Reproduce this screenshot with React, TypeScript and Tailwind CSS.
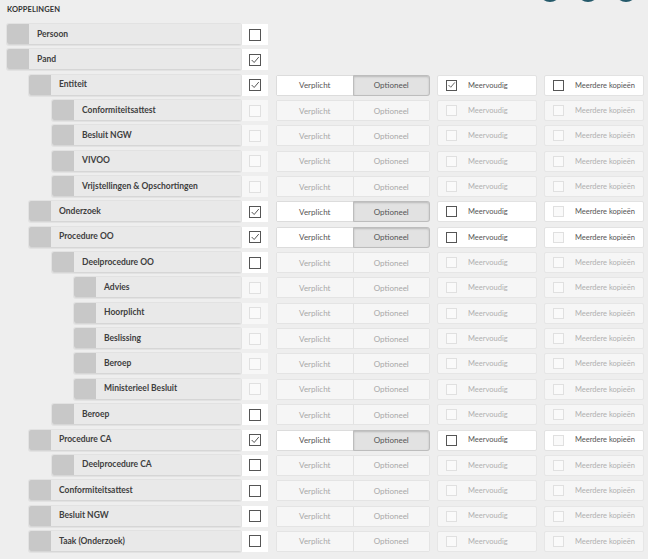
import React from "react";

type Row = {
  label: string;
  level: 0 | 1 | 2 | 3;
  checked?: boolean;
  locked?: boolean; // left checkbox disabled
  options?: "none" | "active" | "disabled";
  multiple?: boolean;
};

const ROWS: Row[] = [
  { label: "Persoon", level: 0, options: "none" },
  { label: "Pand", level: 0, checked: true, options: "none" },
  { label: "Entiteit", level: 1, checked: true, options: "active", multiple: true },
  { label: "Conformiteitsattest", level: 2, locked: true, options: "disabled" },
  { label: "Besluit NGW", level: 2, locked: true, options: "disabled" },
  { label: "VIVOO", level: 2, locked: true, options: "disabled" },
  { label: "Vrijstellingen & Opschortingen", level: 2, locked: true, options: "disabled" },
  { label: "Onderzoek", level: 1, checked: true, options: "active" },
  { label: "Procedure OO", level: 1, checked: true, options: "active" },
  { label: "Deelprocedure OO", level: 2, options: "disabled" },
  { label: "Advies", level: 3, locked: true, options: "disabled" },
  { label: "Hoorplicht", level: 3, locked: true, options: "disabled" },
  { label: "Beslissing", level: 3, locked: true, options: "disabled" },
  { label: "Beroep", level: 3, locked: true, options: "disabled" },
  { label: "Ministerieel Besluit", level: 3, locked: true, options: "disabled" },
  { label: "Beroep", level: 2, options: "disabled" },
  { label: "Procedure CA", level: 1, checked: true, options: "active" },
  { label: "Deelprocedure CA", level: 2, options: "disabled" },
  { label: "Conformiteitsattest", level: 1, options: "disabled" },
  { label: "Besluit NGW", level: 1, options: "disabled" },
  { label: "Taak (Onderzoek)", level: 1, options: "disabled" },
];

const INDENT = ["w-0", "w-[22px]", "w-[45px]", "w-[67px]"];

function Box({ checked, state, size }: { checked?: boolean; state: "on" | "off"; size: "lg" | "sm" }) {
  return (
    <span
      className={`flex items-center justify-center border ${
        size === "lg" ? "w-[12px] h-[12px]" : "w-[11px] h-[11px]"
      } ${state === "on" ? "border-[#555555] bg-white" : "border-[#e0e0e0] bg-[#fafafa]"}`}
    >
      {checked && (
        <svg viewBox="0 0 12 12" className="w-[10px] h-[10px]">
          <polyline points="2,6 5,9 10.5,2.5" fill="none" stroke="#555555" strokeWidth="1.2" />
        </svg>
      )}
    </span>
  );
}

function OptionCells({ row }: { row: Row }) {
  if (row.options === "none") return null;
  const active = row.options === "active";
  return (
    <>
      <div
        className={`ml-[8px] w-[154px] flex rounded-[2px] border text-[8px] ${
          active ? "border-[#dcdcdc] text-[#555555]" : "border-[#e4e4e4] text-[#a8a8a8]"
        }`}
      >
        <div
          className={`flex-1 flex items-center justify-center border-r ${
            active ? "bg-white border-[#dcdcdc]" : "bg-[#f6f6f6] border-[#e2e2e2]"
          }`}
        >
          Verplicht
        </div>
        <div
          className={`flex-1 flex items-center justify-center ${
            active
              ? "bg-[#e2e2e2] shadow-[inset_0_1px_2px_rgba(0,0,0,0.18)] outline outline-[#bdbdbd] rounded-r-[2px]"
              : "bg-[#f6f6f6]"
          }`}
        >
          Optioneel
        </div>
      </div>
      <div
        className={`ml-[7px] w-[100px] flex items-center pl-[8px] rounded-[2px] border text-[7.5px] ${
          active ? "bg-white border-[#e2e2e2] text-[#555555]" : "bg-[#f6f6f6] border-[#e6e6e6] text-[#b0b0b0]"
        }`}
      >
        <Box size="sm" checked={row.multiple} state={active ? "on" : "off"} />
        <span className="ml-[11px]">Meervoudig</span>
      </div>
      <div
        className={`ml-[7px] w-[100px] flex items-center pl-[8px] rounded-[2px] border text-[7.5px] ${
          active ? "bg-white border-[#e2e2e2] text-[#555555]" : "bg-[#f6f6f6] border-[#e6e6e6] text-[#b0b0b0]"
        }`}
      >
        <Box size="sm" state={active && row.multiple ? "on" : "off"} />
        <span className="ml-[11px]">Meerdere kopieën</span>
      </div>
    </>
  );
}

export default function App() {
  return (
    <div
      className="w-[648px] h-[559px] overflow-hidden bg-[#eeeeee] text-[#444444]"
      style={{ fontFamily: "Lato, 'Open Sans', sans-serif" }}
    >
      {/* partially visible action buttons at the top */}
      <div className="flex justify-end gap-[16px] pr-[11px] -mt-[20px] h-[22px]">
        <span className="w-[22px] h-[22px] rounded-full bg-[#24596a]" />
        <span className="w-[22px] h-[22px] rounded-full bg-[#24596a]" />
        <span className="w-[22px] h-[22px] rounded-full bg-[#24596a]" />
      </div>

      <div className="pl-[7px] mt-[1px] h-[13px] text-[7.5px] font-bold text-[#333333] leading-[13px] tracking-[0.1px]">
        KOPPELINGEN
      </div>

      <div className="pl-[7px] mt-[8px] flex flex-col gap-[4.35px]">
        {ROWS.map((row, i) => (
          <div key={i} className="flex h-[21px]">
            <div className="w-[261px] flex">
              <div className={INDENT[row.level]} />
              <div className="flex-1 flex rounded-[2px] border-b border-[#d6d6d6] shadow-[0_0_0_1px_#e2e2e2]">
                <div className="w-[22px] bg-[#c8c8c8] rounded-l-[2px]" />
                <div className="flex-1 bg-[#e9e9e9] flex items-center pl-[8px] text-[8.5px] font-bold text-[#3e3e3e]">
                  {row.label}
                </div>
              </div>
              <div
                className={`ml-[1px] w-[26px] flex items-center justify-center ${
                  row.locked ? "bg-[#f7f7f7]" : "bg-white"
                }`}
              >
                <Box size="lg" checked={row.checked} state={row.locked ? "off" : "on"} />
              </div>
            </div>
            <OptionCells row={row} />
          </div>
        ))}
      </div>
    </div>
  );
}
